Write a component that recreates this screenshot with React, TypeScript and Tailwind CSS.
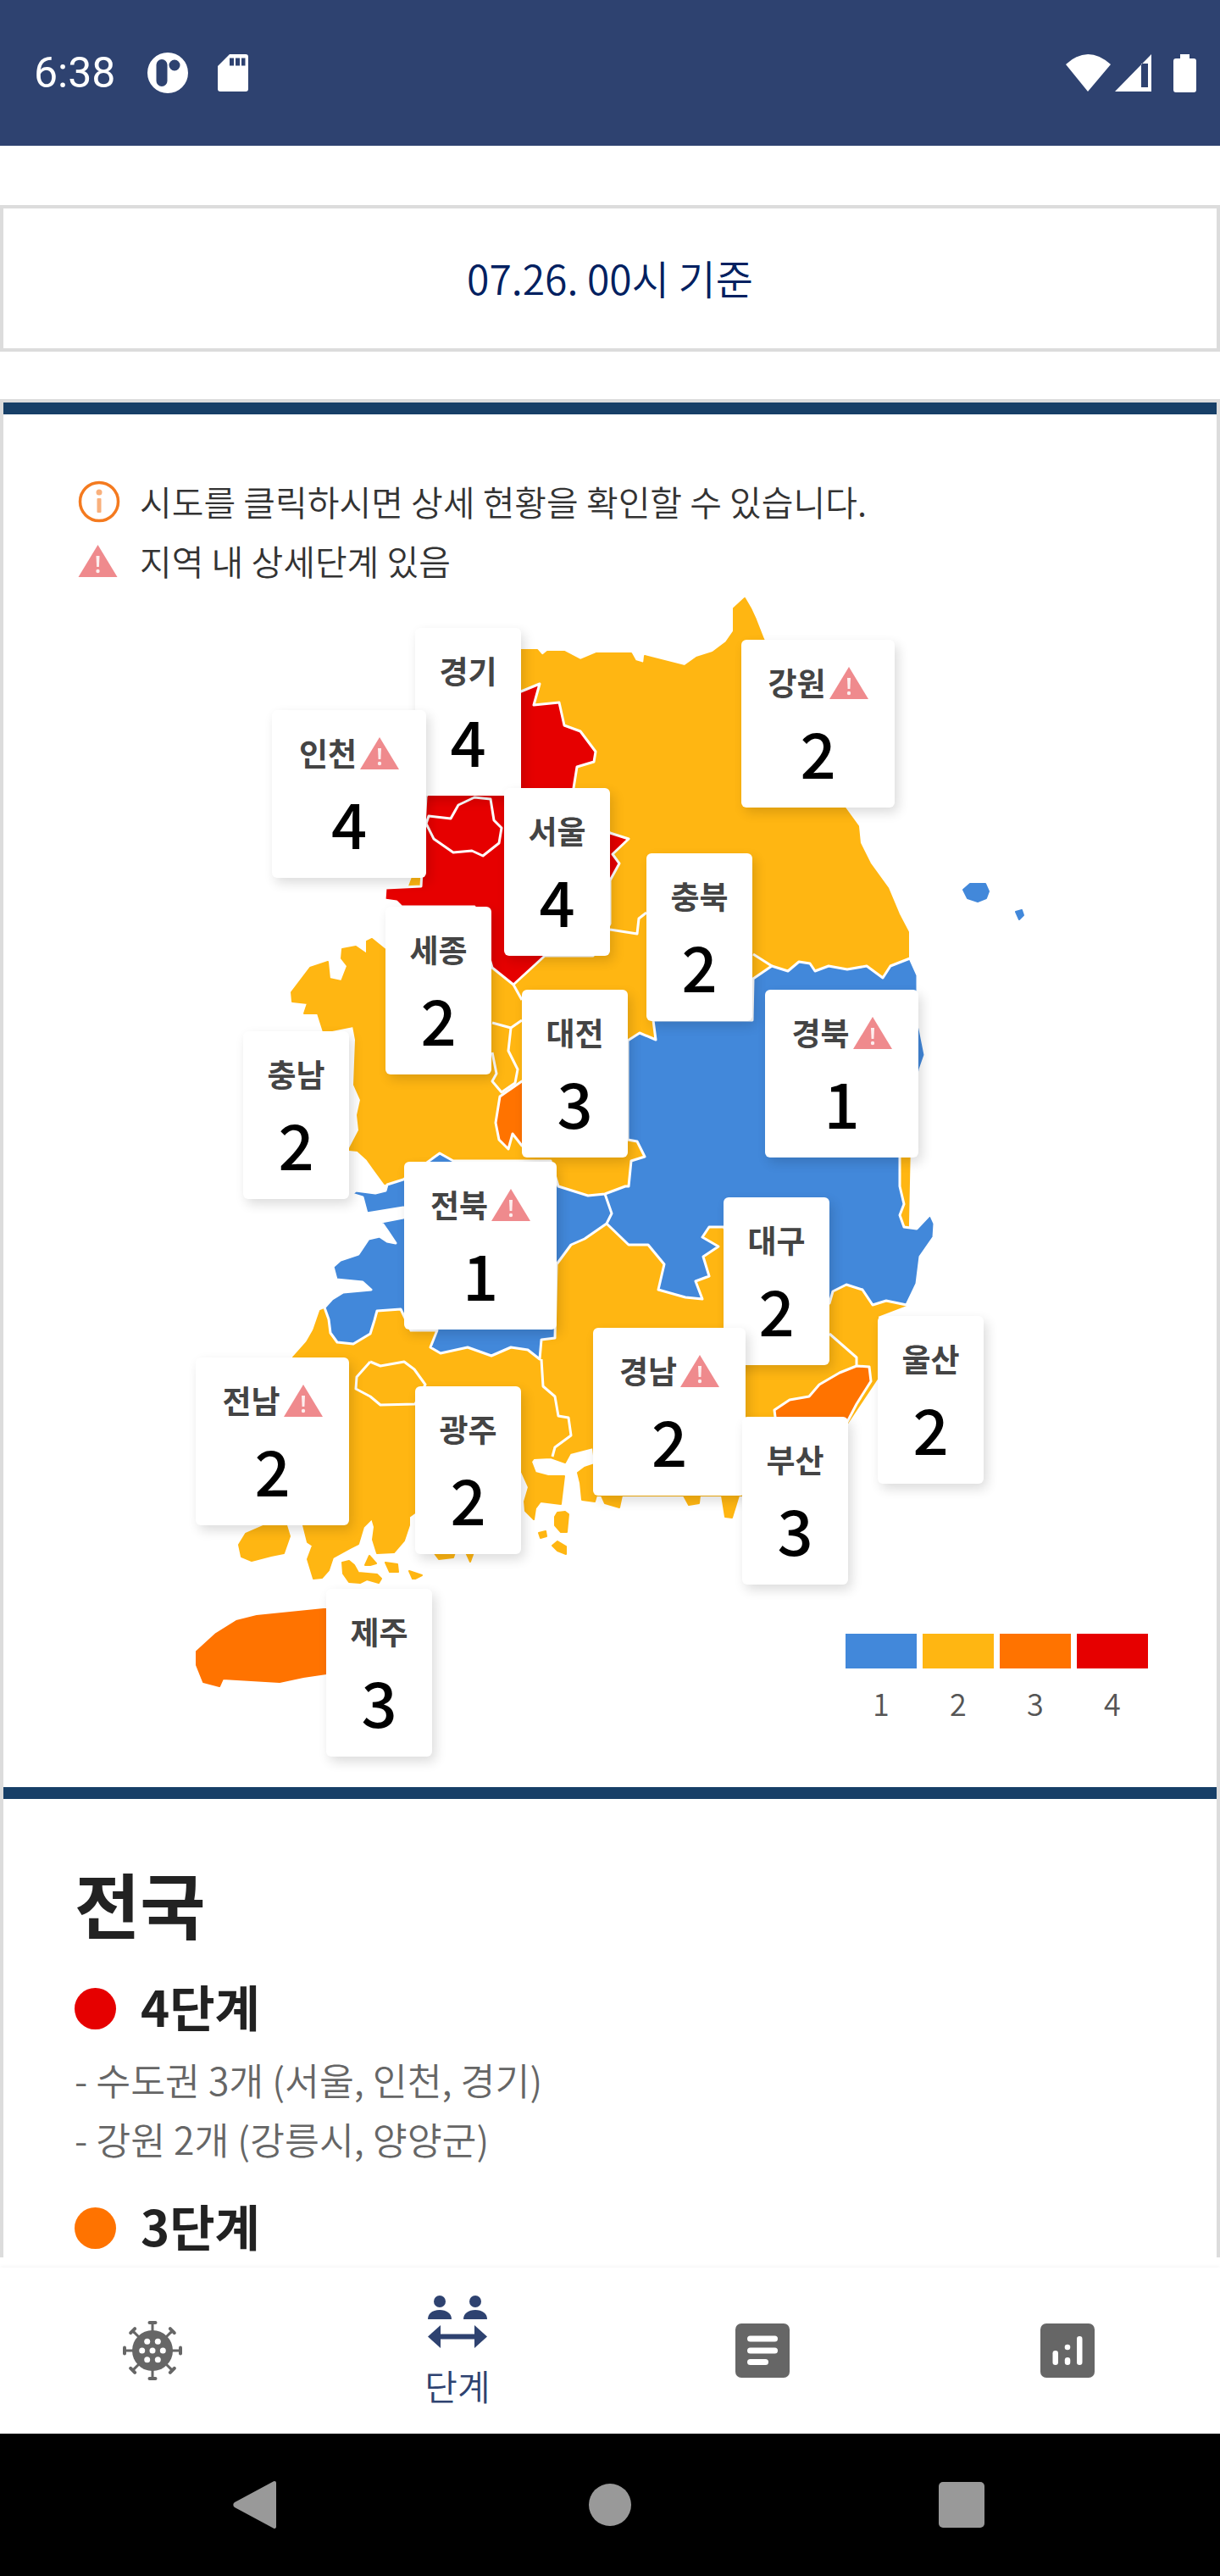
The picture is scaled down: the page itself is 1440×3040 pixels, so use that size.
const BLUE = "#4288da";
const YELLOW = "#ffb612";
const ORANGE = "#ff7300";
const RED = "#e60000";

// map outlines, in page coordinates of the screenshot
const mainland =
  "879,706 886,718 892,731 901,754 997,953 1013,975 1015,995 1027,1019 1048,1048 1061,1079 1072,1100 1072,1131 1075,1300 1070,1540 1036,1553 1040,1620 1000,1680 880,1690 876,1765 872,1765 864,1791 856,1790 852,1765 826,1765 825,1774 813,1776 807,1765 734,1765 731,1779 714,1774 710,1765 704,1765 702,1772 687,1770 685,1750 682,1738 690,1732 702,1728 700,1708 673,1715 667,1726 650,1720 630,1721 627,1725 632,1738 647,1742 666,1742 662,1775 638,1772 632,1780 630,1793 620,1783 619,1772 624,1755 615,1735 610,1731 610,1825 495,1825 495,1785 490,1785 483,1790 483,1800 477,1818 465,1832 445,1833 440,1817 442,1802 439,1792 429,1802 423,1822 413,1827 393,1838 388,1853 380,1862 370,1863 363,1840 369,1824 363,1820 358,1800 350,1700 346,1602 362,1584 370,1570 378,1547 383,1545 400,1560 470,1530 480,1400 454,1397 443,1382 433,1368 422,1358 412,1357 424,1334 422,1316 426,1298 418,1280 420,1227 417,1211 382,1218 375,1196 359,1196 363,1184 345,1182 344,1171 366,1142 387,1135 389,1155 403,1158 410,1140 403,1131 404,1120 420,1117 433,1126 433,1111 439,1108 460,1125 474,1070 500,1000 530,840 615,767 634,767 640,774 646,769 666,769 685,779 704,771 745,771 750,780 760,783 761,774 808,786 822,776 841,770 857,758 866,745 866,718";

const islands = [
  "282,1823 290,1810 313,1800 338,1800 342,1813 335,1833 320,1836 297,1842 285,1837",
  "655,1790 658,1785 667,1784 671,1787 669,1808 662,1808 655,1800",
  "636,1809 644,1807 645,1813 638,1815",
  "652,1824 658,1819 668,1825 668,1834 658,1830",
  "404,1844 412,1842 418,1847 423,1856 445,1858 450,1863 447,1868 433,1864 425,1868 412,1867 405,1857",
  "431,1847 436,1836 444,1845 437,1847",
  "455,1844 469,1846 470,1855 460,1855",
  "483,1854 498,1859 490,1863 487,1863",
  "512,1832 537,1832 535,1838 518,1840",
  "550,1832 559,1832 555,1843",
  "1137,1050 1145,1043 1163,1043 1167,1052 1164,1060 1154,1064 1142,1060",
  "1199,1076 1206,1074 1208,1080 1203,1085",
];

const jeju =
  "232,1949 255,1928 279,1913 303,1907 382,1899 392,1899 392,1974 358,1979 330,1985 263,1981 259,1990 240,1985 232,1965";

const red =
  "615,816 637,807 630,832 660,829 666,856 685,863 703,887 701,899 681,905 677,930 700,960 720,983 742,990 723,1008 731,1019 720,1039 720,1090 700,1128 643,1128 606,1162 581,1142 560,1070 474,1070 468,1064 454,1062 455,1048 497,1046 503,940 560,850";

const seoul =
  "560,941 579,943 583,968 592,977 589,995 570,1010 557,1004 535,1006 512,990 503,972 506,963 532,966 541,950";

const blue =
  "771,1204 774,1227 755,1219 741,1228 741,1345 752,1347 761,1365 745,1370 742,1400 738,1400 714,1409 694,1411 659,1400 650,1370 535,1370 519,1361 476,1392 457,1398 455,1405 443,1408 420,1405 415,1409 428,1413 433,1432 476,1425 476,1437 450,1442 457,1452 467,1467 457,1465 448,1459 435,1462 423,1480 402,1487 393,1495 397,1510 428,1513 438,1522 405,1525 392,1533 383,1543 388,1557 390,1573 398,1584 417,1586 437,1574 442,1558 445,1547 473,1545 485,1570 516,1570 508,1590 520,1597 552,1590 580,1600 603,1590 623,1593 637,1604 639,1581 655,1579 657,1492 674,1469 690,1462 716,1444 742,1469 765,1469 784,1492 777,1522 809,1531 829,1533 821,1512 837,1506 830,1483 848,1471 829,1460 837,1448 854,1448 900,1520 979,1538 983,1524 999,1516 1018,1522 1030,1540 1046,1535 1070,1540 1082,1515 1086,1483 1102,1460 1103,1444 1098,1433 1082,1450 1067,1448 1062,1434 1067,1421 1062,1400 1062,1350 1075,1330 1086,1262 1092,1245 1083,1200 1083,1151 1074,1131 1051,1140 1042,1154 1023,1140 1000,1144 978,1140 962,1146 956,1137 943,1135 930,1146 911,1140 889,1155 888,1204";

const daejeon =
  "616,1276 590,1294 585,1325 589,1345 600,1356 605,1338 616,1352 650,1352 650,1276";

const busan =
  "1026,1613 1011,1612 991,1620 967,1634 955,1648 932,1652 914,1664 916,1680 999,1680 1011,1657 1028,1630";

const borderLines = [
  "714,1409 722,1432 716,1444",
  "606,1162 616,1180",
  "581,1207 603,1213 616,1204",
  "603,1213 600,1240 611,1262 608,1278 592,1289 581,1276 586,1267 581,1242",
  "720,1097 752,1102 754,1084 763,1077",
  "639,1604 641,1636 655,1648 659,1671 671,1673 674,1694 655,1708 652,1719",
  "979,1574 1011,1602 1011,1612",
  "889,1126 911,1140",
  "437,1607 449,1612 477,1607 489,1616 502,1634 490,1657 449,1658 437,1648 420,1639 421,1625 437,1607",
];

const regions = [
  { name: "경기", level: 4, warn: false, box: "left-[486px] top-[252px] w-[125px]" },
  { name: "인천", level: 4, warn: true, box: "left-[317px] top-[349px] w-[182px]" },
  { name: "강원", level: 2, warn: true, box: "left-[871px] top-[266px] w-[181px]" },
  { name: "서울", level: 4, warn: false, box: "left-[591px] top-[441px] w-[125px]" },
  { name: "충북", level: 2, warn: false, box: "left-[759px] top-[518px] w-[125px]" },
  { name: "세종", level: 2, warn: false, box: "left-[451px] top-[581px] w-[125px]" },
  { name: "대전", level: 3, warn: false, box: "left-[612px] top-[679px] w-[125px]" },
  { name: "경북", level: 1, warn: true, box: "left-[899px] top-[679px] w-[181px]" },
  { name: "충남", level: 2, warn: false, box: "left-[283px] top-[728px] w-[125px]" },
  { name: "전북", level: 1, warn: true, box: "left-[473px] top-[882px] w-[180px]" },
  { name: "대구", level: 2, warn: false, box: "left-[850px] top-[924px] w-[125px]" },
  { name: "경남", level: 2, warn: true, box: "left-[696px] top-[1078px] w-[180px]" },
  { name: "전남", level: 2, warn: true, box: "left-[227px] top-[1113px] w-[181px]" },
  { name: "광주", level: 2, warn: false, box: "left-[486px] top-[1147px] w-[125px]" },
  { name: "부산", level: 3, warn: false, box: "left-[872px] top-[1183px] w-[125px]" },
  { name: "울산", level: 2, warn: false, box: "left-[1032px] top-[1064px] w-[125px]" },
  { name: "제주", level: 3, warn: false, box: "left-[381px] top-[1386px] w-[125px]" },
];

const legend = [
  { level: 1, color: "bg-[#4288da]" },
  { level: 2, color: "bg-[#ffb612]" },
  { level: 3, color: "bg-[#ff7300]" },
  { level: 4, color: "bg-[#e60000]" },
];

const WarnIcon = ({ className }: { className: string }) => (
  <svg className={className} viewBox="0 0 46 38">
    <path d="M23 0 46 38H0Z" fill="#ef8a8d" />
    <path d="M21 13h4l-.6 13h-2.8Z" fill="#fff" opacity="0.85" />
    <circle cx="23" cy="31" r="2.2" fill="#fff" opacity="0.85" />
  </svg>
);

const InfoIcon = () => (
  <svg className="h-[50px] w-[50px] shrink-0" viewBox="0 0 50 50">
    <circle cx="25" cy="25" r="22.5" fill="none" stroke="#f47a1f" strokeWidth="3.5" />
    <circle cx="25" cy="14" r="3.5" fill="#f9b07c" />
    <rect x="22.5" y="21" width="5" height="17" rx="1" fill="#f9b07c" />
  </svg>
);

const KoreaMap = () => (
  <svg className="absolute left-0 top-0 h-[1620px] w-[1432px]" viewBox="4 489 1432 1620">
    <polygon points={mainland} fill={YELLOW} stroke={YELLOW} strokeWidth="2" strokeLinejoin="round" />
    {islands.slice(0, 10).map((p) => (
      <polygon key={p} points={p} fill={YELLOW} stroke={YELLOW} strokeWidth="2" strokeLinejoin="round" />
    ))}
    {islands.slice(10).map((p) => (
      <polygon key={p} points={p} fill={BLUE} stroke={BLUE} strokeWidth="2" strokeLinejoin="round" />
    ))}
    <polygon points={jeju} fill={ORANGE} stroke={ORANGE} strokeWidth="2" strokeLinejoin="round" />
    <g stroke="#fff" strokeWidth="3" strokeLinejoin="round">
      <polygon points={red} fill={RED} />
      <polygon points={blue} fill={BLUE} />
      <polygon points={daejeon} fill={ORANGE} />
      <polygon points={busan} fill={ORANGE} />
      <polygon points={seoul} fill={RED} />
      {borderLines.map((p) => (
        <polyline key={p} points={p} fill="none" />
      ))}
    </g>
  </svg>
);

const RegionCard = ({ name, level, warn, box }: { name: string; level: number; warn: boolean; box: string }) => (
  <div className={`absolute flex h-[198px] flex-col items-center rounded-md bg-white shadow-[4px_6px_14px_rgba(0,0,0,0.14)] ${box}`}>
    <div className="mt-[26px] flex h-[50px] items-center gap-[4px] text-[37px] font-bold text-[#444]">
      {name}
      {warn && <WarnIcon className="h-[38px] w-[46px]" />}
    </div>
    <div className="mt-[19px] text-[74px] leading-none font-medium text-black">{level}</div>
  </div>
);

const Level = ({ dot, label }: { dot: string; label: string }) => (
  <div className="flex h-[70px] items-center gap-[29px]">
    <span className={`h-[49px] w-[49px] rounded-full ${dot}`} />
    <span className="-mt-[5px] text-[58px] font-bold text-[#222]">{label}</span>
  </div>
);

const StatusBar = () => (
  <div className="flex h-[172px] shrink-0 items-center bg-[#2e4270] pl-[40px] pr-[28px] text-white">
    <span className="font-['Roboto',sans-serif] text-[50px] leading-none">6:38</span>
    <svg className="ml-[37px] h-[50px] w-[50px]" viewBox="0 0 50 50">
      <path
        fill="#fff"
        fillRule="evenodd"
        d="M25 1a24 24 0 1 0 0 48 24 24 0 0 0 0-48ZM18 9a6.500 6.500 0 0 1 6.500 6.500v19a6.500 6.500 0 0 1-13 0v-19A6.500 6.500 0 0 1 18 9Zm15 .5a6.500 6.500 0 1 1 0 13 6.500 6.500 0 0 1 0-13Z"
      />
    </svg>
    <svg className="ml-[34px] h-[44px] w-[36px]" viewBox="0 0 36 44">
      <path
        fill="#fff"
        fillRule="evenodd"
        d="M14 0h19a3 3 0 0 1 3 3v38a3 3 0 0 1-3 3H3a3 3 0 0 1-3-3V14ZM14 4.500v9h5v-9Zm7 0v9h5v-9Zm7 0v9h4.500v-9Z"
      />
    </svg>
    <svg className="ml-auto h-[44px] w-[53px]" viewBox="0 0 53 44">
      <path fill="#fff" d="M0 12Q26-12 53 12L26 44Z" />
    </svg>
    <svg className="ml-[5px] h-[44px] w-[44px]" viewBox="0 0 44 44">
      <path fill="#fff" fillRule="evenodd" d="M43 0v44H0ZM31 11v28h8V11Z" />
    </svg>
    <svg className="ml-[25px] h-[45px] w-[27px]" viewBox="0 0 27 45">
      <path fill="#fff" d="M8 0h11v5h5a3 3 0 0 1 3 3v34a3 3 0 0 1-3 3H3a3 3 0 0 1-3-3V8a3 3 0 0 1 3-3h5Z" />
    </svg>
  </div>
);

const VirusIcon = () => (
  <svg className="h-[70px] w-[70px]" viewBox="-35 -35 70 70">
    <g stroke="#666" strokeWidth="3" strokeLinecap="round">
      {[0, 45, 90, 135, 180, 225, 270, 315].map((deg) => (
        <g key={deg} transform={`rotate(${deg})`}>
          <line x1="0" y1="-22" x2="0" y2="-31" />
          <line x1="-3.5" y1="-33" x2="3.5" y2="-33" strokeWidth="4" />
        </g>
      ))}
    </g>
    <circle r="24" fill="#666" />
    {[
      [0, 0],
      [-12.300, 0],
      [12.300, 0],
      [-6.300, -10.700],
      [6.300, -10.700],
      [-6.300, 10.700],
      [6.300, 10.700],
    ].map(([x, y]) => (
      <circle key={`${x}-${y}`} cx={x} cy={y} r="3.500" fill="#fff" />
    ))}
  </svg>
);

const DistanceIcon = () => (
  <svg className="h-[63px] w-[70px]" viewBox="0 0 70 63">
    <g fill="#2e4270">
      <circle cx="14" cy="8" r="7" />
      <circle cx="56" cy="8" r="7" />
      <path d="M0 29c0-7 6-11 14-11s14 4 14 11Z" />
      <path d="M42 29c0-7 6-11 14-11s14 4 14 11Z" />
      <path d="M0 49.500 15 36v10.500h40V36l15 13.500L55 63V52.500H15V63Z" />
    </g>
  </svg>
);

const DocIcon = () => (
  <svg className="h-[64px] w-[64px]" viewBox="0 0 64 64">
    <rect width="64" height="64" rx="7" fill="#666" />
    <rect x="14" y="14.500" width="36" height="7" rx="3.500" fill="#fff" />
    <rect x="14" y="28.500" width="36" height="7" rx="3.500" fill="#fff" />
    <rect x="14" y="42" width="25" height="7" rx="3.500" fill="#fff" />
  </svg>
);

const ChartIcon = () => (
  <svg className="h-[64px] w-[64px]" viewBox="0 0 64 64">
    <rect width="64" height="64" rx="7" fill="#666" />
    <rect x="14.500" y="32" width="6.500" height="17" rx="3.200" fill="#fff" />
    <circle cx="32" cy="28" r="3.300" fill="#fff" />
    <rect x="28.800" y="40" width="6.500" height="9" rx="3.200" fill="#fff" />
    <rect x="43" y="15" width="6.500" height="34" rx="3.200" fill="#fff" />
  </svg>
);

const BottomNav = () => (
  <div className="grid h-[196px] shrink-0 grid-cols-4 items-center justify-items-center bg-white shadow-[0_-2px_4px_rgba(0,0,0,0.03)]">
    <VirusIcon />
    <div className="flex flex-col items-center">
      <DistanceIcon />
      <span className="mt-[18px] text-[42px] leading-[52px] font-[350] text-[#2e4270]">단계</span>
    </div>
    <DocIcon />
    <ChartIcon />
  </div>
);

const SoftKeys = () => (
  <div className="grid h-[168px] shrink-0 grid-cols-[550px_340px_1fr] items-center bg-black">
    <svg className="ml-[275px] h-[56px] w-[51px]" viewBox="0 0 51 56">
      <path fill="#999" d="M49 0a2 2 0 0 1 2 2v52a2 2 0 0 1-3 1.700L2 31a3.500 3.500 0 0 1 0-6L48 .300Z" />
    </svg>
    <span className="mx-auto h-[50px] w-[50px] rounded-full bg-[#999]" />
    <span className="ml-[218px] h-[54px] w-[54px] rounded-[5px] bg-[#999]" />
  </div>
);

export default function App() {
  return (
    <div className="flex h-[3040px] w-[1440px] flex-col overflow-hidden bg-white font-['Noto_Sans_CJK_KR',sans-serif]">
      <StatusBar />
      <div className="min-h-0 flex-1 overflow-hidden pt-[70px]">
        <div className="flex h-[173px] items-center justify-center border-4 border-[#dcdcdc] pb-[3px] text-[48px] font-[350] text-[#002060]">
          07.26. 00시 기준
        </div>
        <div className="mt-[56px] border-x-4 border-t-4 border-[#dcdcdc]">
          <div className="h-[14px] bg-[#173f67]" />
          <div className="relative flex h-[1620px] flex-col">
            <KoreaMap />
            <div className="relative pl-[88px] pt-[68px] text-[41px] font-[350] text-[#333]">
              <div className="flex h-[70px] items-center gap-[23px]">
                <InfoIcon />
                시도를 클릭하시면 상세 현황을 확인할 수 있습니다.
              </div>
              <div className="flex h-[70px] items-center gap-[26px]">
                <WarnIcon className="h-[38px] w-[47px] shrink-0" />
                지역 내 상세단계 있음
              </div>
            </div>
            {regions.map((r) => (
              <RegionCard key={r.name} {...r} />
            ))}
            <div className="relative mt-auto mb-[80px] mr-[81px] flex gap-[7px] self-end">
              {legend.map((l) => (
                <div key={l.level} className="flex w-[84px] flex-col items-center">
                  <div className={`h-[41px] w-full ${l.color}`} />
                  <span className="mt-[20px] text-[36px] leading-[40px] font-[350] text-[#555]">{l.level}</span>
                </div>
              ))}
            </div>
          </div>
          <div className="h-[14px] bg-[#173f67]" />
          <div className="px-[84px] pt-[78px]">
            <h2 className="text-[84px] leading-[90px] font-bold text-[#222]">전국</h2>
            <div className="mt-[44px]">
              <Level dot="bg-[#e60000]" label="4단계" />
            </div>
            <div className="mt-[14px] text-[44.5px] leading-[70px] font-[350] text-[#666]">
              <p>- 수도권 3개 (서울, 인천, 경기)</p>
              <p>- 강원 2개 (강릉시, 양양군)</p>
            </div>
            <div className="mt-[35px]">
              <Level dot="bg-[#ff7300]" label="3단계" />
            </div>
          </div>
        </div>
      </div>
      <BottomNav />
      <SoftKeys />
    </div>
  );
}
